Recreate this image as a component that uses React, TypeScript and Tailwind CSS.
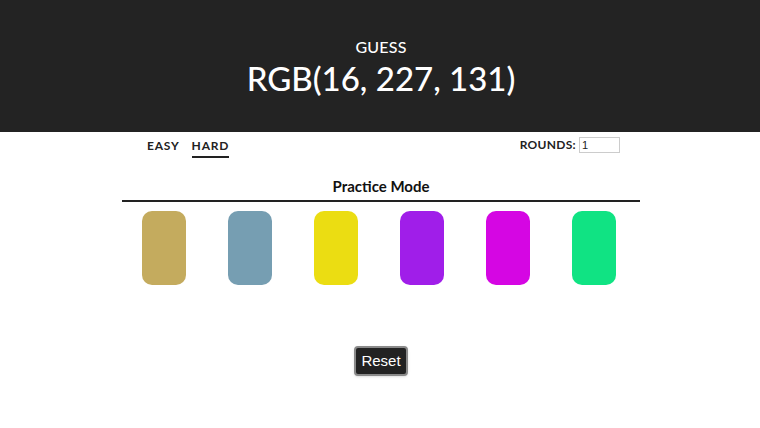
import React from "react";

const swatches = ["#c4ab5e", "#769eb2", "#ebdd12", "#a01ee9", "#d506e3", "#10e383"];

export default function App() {
  return (
    <div className="min-h-[428px] bg-white" style={{ fontFamily: "Lato, 'Open Sans', sans-serif" }}>
      <header className="flex h-[132px] flex-col items-center bg-[#232323] pt-[37px] pl-[2px] text-white">
        <div className="text-[16px] leading-[20px] font-medium tracking-[0.2px]">GUESS</div>
        <h1 className="mt-[1px] text-[33px] leading-[40px] font-medium">RGB(16, 227, 131)</h1>
      </header>

      <div className="mx-auto w-[520px] pl-[2px]">
        <div className="flex h-[36px] items-start justify-between px-[25px] pt-[4px]">
          <div className="flex gap-[12px] text-[12px] font-bold tracking-[0.8px] text-[#222]">
            <span className="pt-[1px]">EASY</span>
            <span className="border-b-2 border-[#222] pt-[1px] pb-[1px]">HARD</span>
          </div>
          <div className="mr-[-5px] flex items-center gap-[3px] text-[12px] font-bold tracking-[0.3px] text-[#222]">
            <span>ROUNDS:</span>
            <input
              defaultValue="1"
              className="h-[16px] w-[41px] border border-[#ccc] px-[2px] text-[11px] font-normal"
              style={{ fontFamily: "'Liberation Sans', Arial, sans-serif" }}
            />
          </div>
        </div>

        <div className="mt-[9px] border-b-2 border-[#222] pb-[4px] text-center text-[15px] leading-[19px] font-bold text-[#111]">
          Practice Mode
        </div>

        <div className="flex gap-[42px] pl-[20px] pt-[9px]">
          {swatches.map((c) => (
            <div key={c} className="h-[74px] w-[44px] rounded-[10px]" style={{ backgroundColor: c }} />
          ))}
        </div>

        <div className="flex justify-center pt-[61px]">
          <button
            className="rounded-[4px] border-2 border-[#8a8a8a] bg-[#222] px-[5px] py-[3px] text-[15px] leading-[20px] text-white shadow"
            style={{ fontFamily: "'Liberation Sans', Arial, sans-serif" }}
          >
            Reset
          </button>
        </div>
      </div>
    </div>
  );
}
